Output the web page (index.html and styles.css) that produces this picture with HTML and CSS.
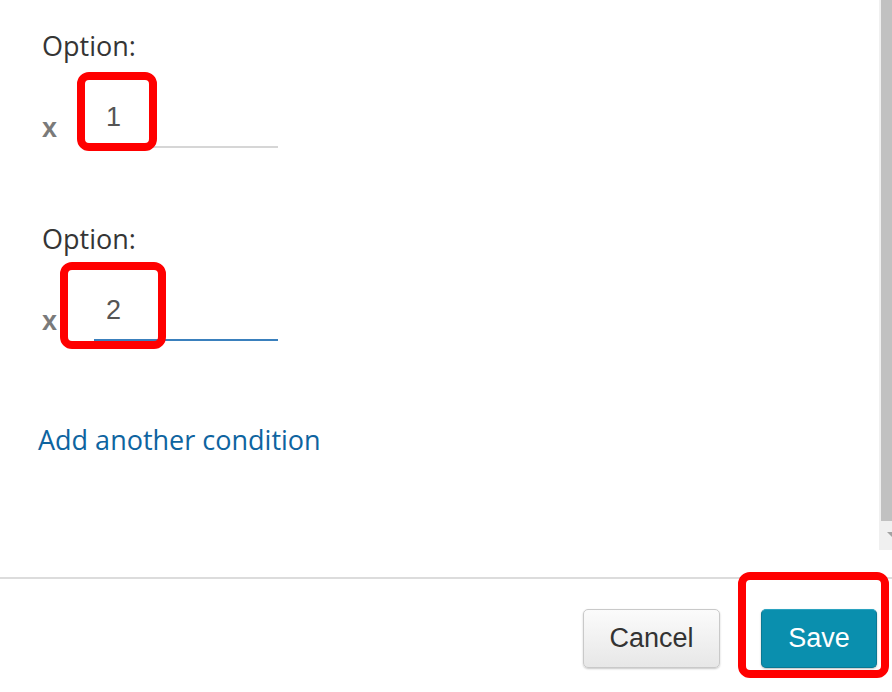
FILE: index.html
```html
<!DOCTYPE html>
<html lang="en">
<head>
<meta charset="utf-8">
<title>Conditions</title>
<link rel="stylesheet" href="styles.css">
</head>
<body>
<div class="page">
  <div class="scroll-area">
    <div class="content">
      <div class="option">
        <div class="label">Option:</div>
        <div class="row">
          <span class="remove">x</span>
          <input class="field" type="text" value="1">
        </div>
      </div>
      <div class="option">
        <div class="label">Option:</div>
        <div class="row">
          <span class="remove">x</span>
          <input class="field field-active" type="text" value="2">
        </div>
      </div>
      <a class="add-link" href="#">Add another condition</a>
    </div>
    <div class="scrollbar">
      <div class="thumb"></div>
      <div class="arrow">
        <svg width="13" height="30" viewBox="0 0 13 30"><polygon points="8,11 18,11 13,16" fill="#a3a3a3"/></svg>
      </div>
    </div>
  </div>
  <div class="footer">
    <button class="btn btn-cancel" type="button">Cancel</button>
    <button class="btn btn-save" type="button">Save</button>
  </div>
  <div class="mark mark-1"></div>
  <div class="mark mark-2"></div>
  <div class="mark mark-3"></div>
</div>
</body>
</html>
```

FILE: styles.css
```css
html, body {
  margin: 0;
  padding: 0;
  background: #ffffff;
  overflow: hidden;
}

.page {
  position: relative;
  width: 892px;
  height: 692px;
}

.scroll-area {
  display: flex;
  height: 550px;
}

.content {
  flex: 1;
  padding: 30px 0 0 40px;
}

.option + .option {
  margin-top: 75px;
}

.label {
  margin-left: 2px;
  font-family: "Open Sans", "Noto Sans", sans-serif;
  font-size: 27px;
  line-height: 32px;
  color: #353535;
}

.row {
  display: flex;
  align-items: flex-end;
  margin-top: 40px;
}

.remove {
  display: block;
  width: 52px;
  margin: 0 0 4px 2px;
  font-family: "Liberation Sans", Arial, sans-serif;
  font-weight: bold;
  font-size: 27px;
  line-height: 32px;
  color: #7a7a7a;
}

.field {
  box-sizing: content-box;
  width: 160px;
  height: 30px;
  margin: 0;
  padding: 0 12px 14px;
  border: none;
  border-bottom: 2px solid #d6d6d6;
  outline: none;
  background: transparent;
  font-family: "Liberation Sans", Arial, sans-serif;
  font-size: 27px;
  color: #555555;
}

.field-active {
  border-bottom-color: #3a80bd;
}

.add-link {
  display: block;
  margin: 83px 0 0 -2px;
  font-family: "Open Sans", "Noto Sans", sans-serif;
  font-size: 27px;
  line-height: 32px;
  color: #0e64a0;
  text-decoration: none;
}

.scrollbar {
  display: flex;
  flex-direction: column;
  width: 13px;
  background: #f0f0f0;
}

.thumb {
  height: 521px;
  margin-left: 2px;
  background: #c1c1c1;
}

.arrow {
  height: 29px;
  overflow: hidden;
}

.arrow svg {
  display: block;
}

.footer {
  display: flex;
  justify-content: flex-end;
  gap: 41px;
  margin-top: 27px;
  padding: 30px 15px 0 0;
  border-top: 2px solid #dcdcdc;
}

.btn {
  box-sizing: border-box;
  height: 59px;
  border-radius: 5px;
  font-family: "Liberation Sans", Arial, sans-serif;
  font-size: 27px;
  padding: 0;
  cursor: pointer;
}

.btn-cancel {
  width: 137px;
  color: #333333;
  border: 1px solid #c9c9c9;
  background: linear-gradient(#fbfbfb, #e7e7e7);
  box-shadow: 0 1px 2px rgba(0, 0, 0, 0.22);
}

.btn-save {
  width: 116px;
  color: #ffffff;
  border: 1px solid #0a7893;
  border-top-color: #2aa3c0;
  background: #0a8fae;
  box-shadow: 0 1px 2px rgba(0, 0, 0, 0.25);
}

.mark {
  position: absolute;
  box-sizing: border-box;
  border: 8px solid #ff0000;
  border-radius: 12px;
}

.mark-1 {
  left: 77px;
  top: 72px;
  width: 80px;
  height: 79px;
}

.mark-2 {
  left: 60px;
  top: 262px;
  width: 106px;
  height: 87px;
}

.mark-3 {
  left: 738px;
  top: 572px;
  width: 151px;
  height: 106px;
}
```
